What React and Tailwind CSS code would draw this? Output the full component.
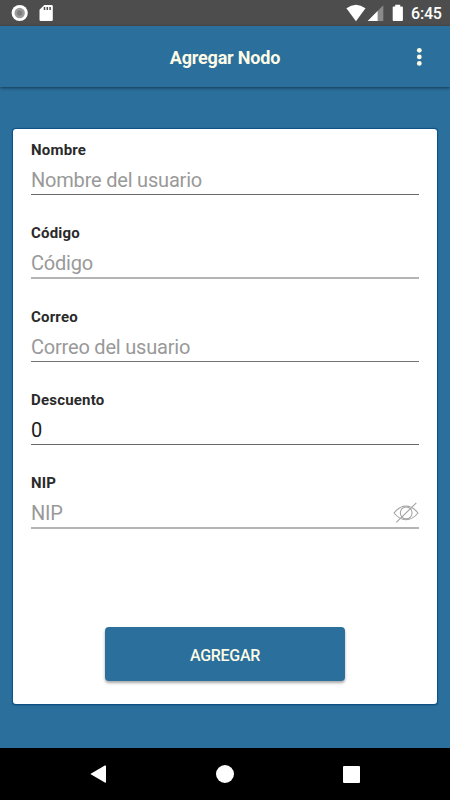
import React, { useState } from 'react';

const initialFields = [
  { id: 'nombre', label: 'Nombre', placeholder: 'Nombre del usuario', value: '', line: 'h-px bg-[#686868]', box: 'h-[83px]' },
  { id: 'codigo', label: 'Código', placeholder: 'Código', value: '', line: 'h-[2px] bg-[#b4b4b4]', box: 'h-[84px]' },
  { id: 'correo', label: 'Correo', placeholder: 'Correo del usuario', value: '', line: 'h-px bg-[#747474]', box: 'h-[83px]' },
  { id: 'descuento', label: 'Descuento', placeholder: '', value: '0', line: 'h-px bg-[#686868]', box: 'h-[83px]' },
  { id: 'nip', label: 'NIP', placeholder: 'NIP', value: '', line: 'h-[2px] bg-[#b4b4b4]', box: 'h-[84px]' },
];

const StatusBar = () => (
  <div className="flex h-[26px] shrink-0 items-center bg-[#4d4d4d] text-white">
    <svg className="ml-[11px] h-[18px] w-[18px]" viewBox="0 0 18 18">
      <circle cx="8.7" cy="9" r="8.1" fill="#fff" />
      <circle cx="8.7" cy="9" r="5.2" fill="#9b9b9b" />
      <circle cx="8.7" cy="9" r="2.7" fill="#7d7d7d" />
    </svg>
    <svg className="ml-[10px] h-[18px] w-[15px]" viewBox="0 0 15 18">
      <path d="M5.3 1h7.2q1.3 0 1.3 1.3v13.4q0 1.3-1.3 1.3H1.8Q.5 17 .5 15.7V5.8Z" fill="#fff" />
      <path d="M5.5 3v3M8.3 3v3M11.1 3v3" stroke="#4d4d4d" strokeWidth="1.5" />
    </svg>
    <div className="ml-auto flex items-center">
      <svg className="h-[18px] w-[20px]" viewBox="0 0 20 18">
        <path d="M.4 4.3Q10-3 19.5 4.3L10 17.2Z" fill="#fff" />
      </svg>
      <svg className="ml-[1px] h-[18px] w-[17px]" viewBox="0 0 17 18">
        <path d="M.7 17 16.3 1.3V17Z" fill="#8a8a8a" />
        <path d="M.7 17 10.6 7.1V17Z" fill="#fff" />
      </svg>
      <svg className="ml-[8px] h-[18px] w-[12px]" viewBox="0 0 12 18">
        <path d="M3.2.7h5V2.4h1.8q.9 0 .9.9v12.8q0 .9-.9.9H1.6q-.9 0-.9-.9V3.3q0-.9.9-.9h1.6Z" fill="#fff" />
      </svg>
      <span className="ml-[7px] w-[39px] pt-[2px] text-[16px] leading-[26px] font-medium tracking-[-0.2px]">6:45</span>
    </div>
  </div>
);

const AppBar = () => (
  <div className="relative flex h-[61px] shrink-0 items-center justify-center shadow-[0_1px_3px_rgba(0,0,0,0.5)]">
    <h1 className="pt-[2px] text-[18px] font-bold tracking-[-0.2px] text-[#fdfbe6]">Agregar Nodo</h1>
    <button type="button" aria-label="Menu" className="absolute top-[20px] right-[27px]">
      <svg className="h-[22px] w-[8px]" viewBox="0 0 8 22" fill="#fdfbe6">
        <circle cx="4.3" cy="4.3" r="2.4" />
        <circle cx="4.3" cy="10.9" r="2.4" />
        <circle cx="4.3" cy="17.4" r="2.4" />
      </svg>
    </button>
  </div>
);

const EyeOff = () => (
  <svg className="h-[22px] w-[26px]" viewBox="0 0 26 22" fill="none" stroke="#a3a3a3" strokeWidth="1.1">
    <path d="M1 11Q6.5 4 13 4T25 11Q19.5 17.7 13 17.7T1 11Z" />
    <circle cx="13.2" cy="10.9" r="5.9" />
    <path d="M3.3 20.3 23.3.9" />
  </svg>
);

const Field = ({ field, onChange }) => (
  <div className={field.box}>
    <label htmlFor={field.id} className="block h-[18px] text-[15px] leading-[18px] font-bold tracking-[0.2px] text-[#2a2a2a]">
      {field.label}
    </label>
    <div className="flex h-[35px] items-center pt-[6px]">
      <input
        id={field.id}
        value={field.value}
        placeholder={field.placeholder}
        onChange={(e) => onChange(field.id, e.target.value)}
        className="h-[27px] min-w-0 flex-1 text-[20px] tracking-[-0.2px] text-[#202020] outline-none placeholder:text-[#999999]"
      />
      {field.id === 'nip' && <EyeOff />}
    </div>
    <div className={field.line} />
  </div>
);

const App = () => {
  const [fields, setFields] = useState(initialFields);

  const handleChange = (id, value) => {
    setFields(fields.map(f => (f.id === id ? { ...f, value } : f)));
  };

  return (
    <div className="flex h-[800px] w-[450px] flex-col overflow-hidden bg-[#2b6f9c] font-['Roboto',sans-serif]">
      <StatusBar />
      <AppBar />

      <form
        onSubmit={(e) => e.preventDefault()}
        className="mx-[13px] mt-[42px] flex h-[575px] shrink-0 flex-col rounded-[3px] bg-white px-[18px] pt-[12px] shadow-[0_0_1px_0.5px_#0b5288,0_1px_2px_rgba(0,0,0,0.3)]"
      >
        {fields.map(field => (
          <Field key={field.id} field={field} onChange={handleChange} />
        ))}
        <button
          type="submit"
          className="mx-auto mt-[69px] h-[54px] w-[240px] rounded-[4px] bg-[#2b6f9c] pt-[3px] text-[16px] font-medium tracking-[-0.3px] text-[#fdfbe6] shadow-[0_2px_3px_rgba(0,0,0,0.35)]"
        >
          AGREGAR
        </button>
      </form>

      <div className="mt-auto flex h-[52px] shrink-0 items-center justify-between bg-black px-[90px]">
        <svg className="h-[18px] w-[17px]" viewBox="0 0 17 18">
          <path d="M.3 9 14.8.6Q16 0 16 1v16q0 1-1.2.4Z" fill="#fff" />
        </svg>
        <div className="h-[18px] w-[18px] rounded-full bg-white" />
        <div className="h-[17px] w-[17px] rounded-[1px] bg-white" />
      </div>
    </div>
  );
};

export default App;
